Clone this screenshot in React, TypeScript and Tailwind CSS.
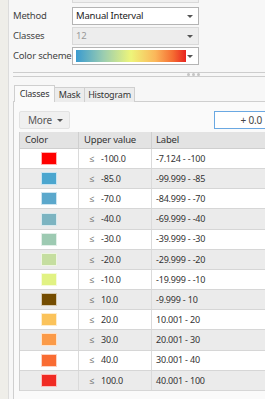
import React from 'react';

const ROWS = [
    { color: '#ff0000', upper: '-100.0', label: '-7.124 - -100' },
    { color: '#4ba6cf', upper: '-85.0', label: '-99.999 - -85' },
    { color: '#5ba8cc', upper: '-70.0', label: '-84.999 - -70' },
    { color: '#7cb4c1', upper: '-40.0', label: '-69.999 - -40' },
    { color: '#9dcab2', upper: '-30.0', label: '-39.999 - -30' },
    { color: '#c5de9f', upper: '-20.0', label: '-29.999 - -20' },
    { color: '#e1f283', upper: '-10.0', label: '-19.999 - -10' },
    { color: '#744c00', upper: '10.0', label: '-9.999 - 10' },
    { color: '#fbc35b', upper: '20.0', label: '10.001 - 20' },
    { color: '#fb9a47', upper: '30.0', label: '20.001 - 30' },
    { color: '#f96c33', upper: '40.0', label: '30.001 - 40' },
    { color: '#f02b23', upper: '100.0', label: '40.001 - 100' },
];

function Caret() {
    return <span className="w-0 h-0 border-l-[3px] border-r-[3px] border-t-[3px] border-l-transparent border-r-transparent border-t-[#555]" />;
}

function FieldRow({ label, children, className }: { label: string; children: React.ReactNode; className: string }) {
    return (
        <div className="flex items-center">
            <span className="w-[59px] shrink-0 text-[#444] leading-none whitespace-nowrap">{label}</span>
            <div className={`w-[127px] h-[18px] border flex items-center pl-[3px] pr-[5px] ${className}`}>
                <div className="flex-1 flex items-center min-w-0">{children}</div>
                <Caret />
            </div>
        </div>
    );
}

export default function App() {
    return (
        <div
            className="w-[265px] h-[399px] overflow-hidden flex bg-[#efeee9] text-[9.5px] tracking-[-0.2px]"
            style={{ fontFamily: '"Noto Sans", "Open Sans", sans-serif' }}
        >
            {/* left strip */}
            <div className="w-[9px] shrink-0 border-r border-[#dcdcdc]" />

            <div className="flex-1 bg-[#f7f7f7] overflow-hidden pl-[4px]">
                {/* ===== SYMBOLOGY FIELDS ===== */}
                <div className="flex flex-col">
                    <div className="ml-[59px] w-[127px] h-[17px] -mt-[14px] border border-[#d9d9d9] bg-[#efefef]" />
                    <div className="mt-[4px] flex flex-col gap-[2px]">
                        <FieldRow label="Method" className="bg-white border-[#b4b4b4]">
                            <span className="text-[#222] leading-none whitespace-nowrap">Manual Interval</span>
                        </FieldRow>
                        <FieldRow label="Classes" className="bg-[#ededed] border-[#d9d9d9]">
                            <span className="text-[#9a9a9a] leading-none">12</span>
                        </FieldRow>
                        <FieldRow label="Color scheme" className="bg-white border-[#b4b4b4]">
                            <div
                                className="w-[110px] h-[12px]"
                                style={{ background: 'linear-gradient(to right, #3a9bd0, #9bcdb0 25%, #eef57a 50%, #fbb75a 72%, #f56d32 88%, #e8231f)' }}
                            />
                        </FieldRow>
                    </div>
                </div>

                {/* ===== SPLITTER ===== */}
                <div className="mt-[7px] relative">
                    <div className="h-[1px] bg-[#cdcdcd]" />
                    <div className="h-[3px]" />
                    <div className="h-[1px] bg-[#cdcdcd]" />
                    <div className="absolute left-[174px] top-[1px] flex gap-[2px]">
                        <span className="w-[3px] h-[3px] rounded-full bg-[#c4c4c4]" />
                        <span className="w-[3px] h-[3px] rounded-full bg-[#c4c4c4]" />
                        <span className="w-[3px] h-[3px] rounded-full bg-[#c4c4c4]" />
                    </div>
                </div>

                {/* ===== TABS ===== */}
                <div className="mt-[8px] flex items-end h-[17px] relative z-10 whitespace-nowrap text-[9px]">
                    <div className="h-[17px] w-[41px] justify-center flex items-center border border-b-0 border-[#cfcfcf] bg-[#fafafa] ml-[1px] text-[#333]">Classes</div>
                    <div className="h-[15px] w-[30px] justify-center flex items-center border border-l-0 border-b-0 border-[#cfcfcf] bg-[#ececec] text-[#333]">Mask</div>
                    <div className="h-[15px] w-[50px] justify-center flex items-center border border-l-0 border-b-0 border-[#cfcfcf] bg-[#ececec] text-[#333]">Histogram</div>
                </div>

                <div className="w-[262px] h-[320px] border border-[#cfcfcf] bg-[#fafafa] -mt-[1px] pl-[5px] pr-[4px]">
                    {/* toolbar */}
                    <div className="mt-[9px] flex items-center">
                        <div className="w-[51px] h-[18px] rounded-[2px] border border-[#e2e2e2] bg-[#f0f0f0] flex items-center pl-[8px] pr-[6px] justify-between text-[10px]">
                            <span className="text-[#555] leading-none">More</span>
                            <Caret />
                        </div>
                        <div className="ml-auto w-[56px] h-[18px] border border-[#6aa8e2] bg-white flex items-center justify-end pr-[7px] text-[10px]">
                            <span className="text-[#444] leading-none">+ 0.0</span>
                        </div>
                    </div>

                    {/* table */}
                    <div className="mt-[3px] border-l border-[#d0d0d0] text-[9px] text-[#333] whitespace-nowrap">
                        <div className="flex h-[17px] bg-[#e3e3e3] border-b border-[#cfcfcf] text-[9.5px]">
                            <div className="w-[59px] border-r border-[#cfcfcf] flex items-center pl-[5px]">Color</div>
                            <div className="w-[73px] border-r border-[#cfcfcf] flex items-center pl-[5px]">Upper value</div>
                            <div className="flex-1 flex items-center pl-[4px]">Label</div>
                        </div>
                        {ROWS.map((r, i) => (
                            <div
                                key={r.label}
                                className={`flex h-[20.17px] border-b border-[#d6d6d6] ${i % 2 === 0 ? 'bg-white' : 'bg-[#ebebeb]'}`}
                            >
                                <div className="w-[59px] border-r border-[#dadada] flex items-center justify-center">
                                    <span className="w-[16px] h-[13px] border border-white/70" style={{ backgroundColor: r.color }} />
                                </div>
                                <div className="w-[73px] border-r border-[#dadada] flex items-center pl-[10px]">
                                    <span className="text-[#666] w-[12px]">≤</span>
                                    <span>{r.upper}</span>
                                </div>
                                <div className="flex-1 flex items-center pl-[4px]">{r.label}</div>
                            </div>
                        ))}
                    </div>
                </div>
            </div>
        </div>
    );
}
